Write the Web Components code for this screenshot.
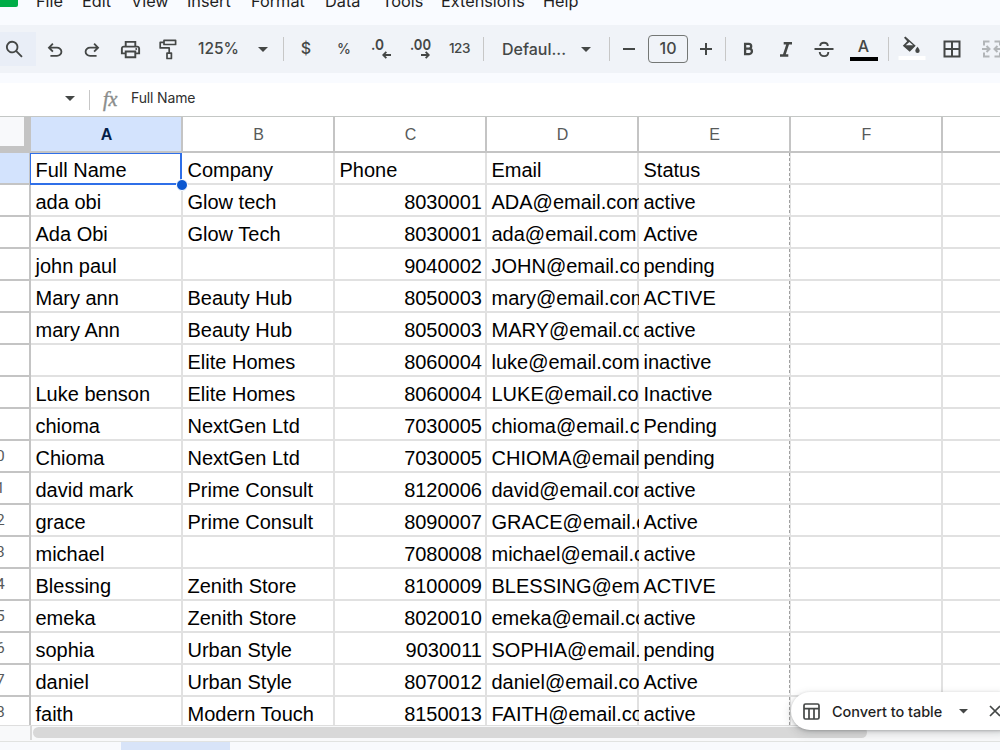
<!DOCTYPE html>
<html lang="en">
<head>
<meta charset="utf-8">
<title>Sheet</title>
<style>
  html, body {
    margin: 0;
    height: 750px;
    overflow: hidden;
    background: #fff;
  }
</style>
</head>
<body>
<sheet-app></sheet-app>

<script>
class MenuBar extends HTMLElement {
  constructor() {
    super();
    this.shadowDOM = this.attachShadow({mode: 'open'});
  }

  connectedCallback() {
    this.shadowDOM.innerHTML = `
      <style>
        :host {
          display: flex;
          height: 25px;
          overflow: hidden;
          font: 16.3px Inter, sans-serif;
          color: #1f1f1f;
        }
        .logo {
          width: 18px;
          height: 7px;
          margin-right: 18px;
          background: #00ac47;
          border-radius: 0 0 2px 0;
        }
        nav {
          display: grid;
          grid-template-columns: 46px 49px 56px 64px 74px 57px 59px 102px 60px;
          height: 20px;
          margin-top: -9px;
          line-height: 20px;
        }
      </style>
      <div class="logo"></div>
      <nav>${['File', 'Edit', 'View', 'Insert', 'Format', 'Data', 'Tools', 'Extensions', 'Help']
        .map(item => `<span>${item}</span>`).join('')}</nav>
    `;
  }
}
customElements.define('menu-bar', MenuBar);

// width: the tool's slot in the bar
class ToolButton extends HTMLElement {
  constructor() {
    super();
    this.shadowDOM = this.attachShadow({mode: 'open'});
  }

  connectedCallback() {
    this.shadowDOM.innerHTML = `
      <style>
        :host {
          display: flex;
          flex: none;
          width: ${this.getAttribute('width')}px;
          height: 34px;
          align-items: center;
          justify-content: center;
        }
        ::slotted(svg) {
          display: block;
          flex: none;
        }
      </style>
      <slot></slot>
    `;
  }
}
customElements.define('tool-button', ToolButton);

class ToolBar extends HTMLElement {
  constructor() {
    super();
    this.shadowDOM = this.attachShadow({mode: 'open'});
  }

  connectedCallback() {
    this.shadowDOM.innerHTML = `
      <style>
        :host {
          display: flex;
          align-items: center;
          height: 48px;
          overflow: hidden;
          background: #f0f3f8;
          color: #444746;
          font: 500 16px Inter, sans-serif;
        }
        svg { fill: currentColor; }
        .search {
          background: #e9eef7;
          justify-content: flex-start;
          box-sizing: border-box;
          padding-left: 3px;
        }
        .sep {
          flex: none;
          width: 1px;
          height: 24px;
          background: #c7c7c7;
        }
        .pick {
          display: flex;
          flex: none;
          box-sizing: border-box;
          align-items: center;
          justify-content: space-between;
        }
        .pick span { padding-bottom: 1px; }
        .pick svg { margin-top: 1px; }
        .zoom { width: 97px; padding: 0 15px 0 12px; font-size: 15.500px; }
        .font { width: 125px; padding: 0 18px 0 18px; font-size: 16px; }
        .size {
          flex: none;
          box-sizing: border-box;
          width: 40px;
          height: 28px;
          margin-left: 2px;
          border: 1px solid #747775;
          border-radius: 4px;
          text-align: center;
          line-height: 25px;
        }
        .letter {
          display: flex;
          flex-direction: column;
          align-items: center;
          width: 28px;
          height: 20px;
          border-bottom: 4px solid #000;
          line-height: 18px;
        }
        .up { padding-bottom: 2px; }
        .gap3 { margin-left: 3px; }
        .gap8 { margin-left: 8px; }
        .gap4 { margin-left: 4px; }
      </style>
      <tool-button class="search" width="36">
        <svg width="23" height="23" viewBox="0 0 24 24"><path d="M20.5 19l-5.700-5.700a6.500 6.500 0 1 0-1.400 1.400l5.700 5.700zM5 9.500a4.600 4.600 0 1 1 9.200 0a4.600 4.600 0 1 1-9.200 0z"/></svg>
      </tool-button>
      <tool-button width="37">
        <svg width="22" height="22" viewBox="0 0 24 24"><path d="M7 20.500v-2h7.100q1.575 0 2.738-1T18 15t-1.162-2.500T14.100 11.500H7.800l2.600 2.600L9 15.500l-5-5 5-5 1.400 1.400L7.800 9.500h6.300q2.425 0 4.163 1.575T20 15t-1.738 3.925T14.100 20.500z"/></svg>
      </tool-button>
      <tool-button width="37">
        <svg width="22" height="22" viewBox="0 0 24 24"><path d="M17 20.500v-2H9.900q-1.575 0-2.738-1T6 15t1.162-2.500T9.900 11.500h6.300l-2.600 2.600L15 15.500l5-5-5-5-1.400 1.400L16.200 9.500H9.900q-2.425 0-4.163 1.575T4 15t1.737 3.925T9.900 20.500z"/></svg>
      </tool-button>
      <tool-button width="40">
        <svg width="23" height="23" viewBox="0 0 24 24"><path d="M19 8h-1V3H6v5H5c-1.660 0-3 1.340-3 3v6h4v4h12v-4h4v-6c0-1.660-1.340-3-3-3zM8 5h8v3H8V5zm8 12v2H8v-4h8v2zm2-2v-2H6v2H4v-4c0-.55.450-1 1-1h14c.550 0 1 .450 1 1v4h-2z"/><circle cx="18" cy="11.500" r="1"/></svg>
      </tool-button>
      <tool-button width="36">
        <svg width="20" height="22" viewBox="0 0 20 22" style="fill:none;stroke:currentColor;stroke-width:1.700"><path d="M6 2.400h11.600v4.100H6zM6 4.400H2.200v5.500h9v5.200M9 15.100h4.400v5.400H9z" stroke-linejoin="round"/></svg>
      </tool-button>
      <div class="pick zoom"><span>125%</span><svg width="10" height="5"><path d="M0 0h10L5 5z"/></svg></div>
      <div class="sep"></div>
      <tool-button width="44"><span class="up">$</span></tool-button>
      <tool-button width="32"><span class="up" style="font-size:14px">%</span></tool-button>
      <tool-button width="42">
        <svg width="22" height="22" viewBox="0 0 22 22"><text x="1" y="12" font-size="15" font-weight="600" textLength="13" lengthAdjust="spacingAndGlyphs">.0</text><path d="M21 16v1.900h-5.500l1.500 1.500-1.300 1.300-3.700-3.700 3.700-3.700 1.300 1.300-1.500 1.400z"/></svg>
      </tool-button>
      <tool-button width="38">
        <svg width="22" height="22" viewBox="0 0 22 22"><text x="0" y="12" font-size="15" font-weight="600" textLength="21" lengthAdjust="spacingAndGlyphs">.00</text><path d="M11 16v1.900h5.500l-1.500 1.500 1.300 1.300 3.700-3.700-3.700-3.700-1.300 1.300 1.500 1.400z"/></svg>
      </tool-button>
      <tool-button width="39"><span class="up" style="font-size:13.500px;letter-spacing:-.4px">123</span></tool-button>
      <div class="sep gap4"></div>
      <div class="pick font"><span>Defaul...</span><svg width="10" height="5"><path d="M0 0h10L5 5z"/></svg></div>
      <div class="sep"></div>
      <tool-button width="38"><svg width="14" height="14"><path d="M1 6h12v2H1z"/></svg></tool-button>
      <div class="size" style="margin-left:0">10</div>
      <tool-button width="35"><svg width="14" height="14"><path d="M1 6h5V1h2v5h5v2H8v5H6V8H1z"/></svg></tool-button>
      <div class="sep" style="margin-left:2px"></div>
      <tool-button width="45">
        <svg width="11" height="14" viewBox="0 0 12 14" style="fill:none;stroke:currentColor;stroke-width:2.500"><path d="M2.300 1.300h4a2.600 2.600 0 0 1 0 5.300h-4zM2.300 6.600h4.500a2.900 2.900 0 0 1 0 5.900H2.300z"/></svg>
      </tool-button>
      <tool-button width="30">
        <svg width="14" height="15" viewBox="0 0 14 15"><path d="M4.700 0H13v2.500H10L6.800 12.300h2.500v2.500H1v-2.500h3L7.200 2.500H4.700z"/></svg>
      </tool-button>
      <tool-button width="46">
        <svg width="20" height="18" viewBox="0 0 20 18" style="fill:none;stroke:currentColor;stroke-width:1.900"><path d="M.5 9h19M6.200 6C6.400 1.600 13.600 1.600 13.800 6M5.700 12c.5 5.500 8.600 5.500 8.600 0"/></svg>
      </tool-button>
      <tool-button width="33"><span class="letter">A</span></tool-button>
      <div class="sep gap8"></div>
      <tool-button width="46">
        <svg width="28" height="26" viewBox="0 0 28 26"><path d="M6 1.800L7.400.4l10.300 9.400-6 6-6.900-6.100L9.200 5.300zM7.700 9.200h7.400L11.400 6.100z" fill-rule="evenodd"/><path d="M19.500 10.700s2.200 2.500 2.200 4a2.200 2.200 0 0 1-4.400 0c0-1.500 2.200-4 2.200-4z"/><path d="M.5 20h27v4H.5z" fill="#fff"/></svg>
      </tool-button>
      <tool-button width="34">
        <svg width="18" height="18" viewBox="0 0 18 18" style="fill:none;stroke:currentColor;stroke-width:2"><path d="M1.500 1.500h15v15h-15zM9 1.500v15M1.500 9h15"/></svg>
      </tool-button>
      <tool-button width="46">
        <svg width="20" height="18" viewBox="0 0 20 18" style="fill:none;stroke:#b2b5b8;stroke-width:2"><path d="M7.500 1.500H2v4M2 12.500v4h5.500M12.500 1.500H18v4M18 12.500v4h-5.500M0 9h7M4.500 6l3 3-3 3M20 9h-7M15.500 6l-3 3 3 3"/></svg>
      </tool-button>
    `;
  }
}
customElements.define('tool-bar', ToolBar);

class FormulaBar extends HTMLElement {
  constructor() {
    super();
    this.shadowDOM = this.attachShadow({mode: 'open'});
  }

  connectedCallback() {
    this.shadowDOM.innerHTML = `
      <style>
        :host {
          display: flex;
          box-sizing: border-box;
          height: 34px;
          margin-top: 10px;
          padding: 0 0 2px 65px;
          align-items: center;
          background: #fff;
          border-bottom: 1px solid #c4c7c5;
          font: 14px Inter, sans-serif;
          color: #303030;
        }
        .sep {
          width: 1px;
          height: 20px;
          margin: 2px 13px 0 14px;
          background: #c7c7c7;
        }
        .fx {
          width: 18px;
          margin: 1px 10px 0 0;
          font: italic 20px/20px "Liberation Serif", serif;
          color: #8a8d8c;
          -webkit-text-stroke: .4px #8a8d8c;
        }
        .value { letter-spacing: -.15px; padding-bottom: 2px; }
      </style>
      <svg width="10" height="5" fill="#444746"><path d="M0 0h10L5 5z"/></svg>
      <div class="sep"></div>
      <span class="fx">fx</span>
      <span class="value"><slot></slot></span>
    `;
  }
}
customElements.define('formula-bar', FormulaBar);

class SheetGrid extends HTMLElement {
  constructor() {
    super();
    this.shadowDOM = this.attachShadow({mode: 'open'});
  }

  set rows(rows) {
    this._rows = rows;
    this.render();
  }

  renderRow(row, i) {
    const cells = row.map((text, col) => {
      const names = ['cell'];
      if (col === 2 && i > 0) names.push('num');
      if (col === 4) names.push('edge');
      if (col === 0 && i === 0) names.push('active');
      return `<div class="${names.join(' ')}">${text}</div>`;
    }).join('');
    // only two-digit numbers reach into view
    const number = i < 9 ? '' : `<span>${i + 1}</span>`;
    return `<div class="rownum${i === 0 ? ' on' : ''}">${number}</div>${cells}
      <div class="cell"></div><div class="cell"></div>`;
  }

  render() {
    this.shadowDOM.innerHTML = `
      <style>
        :host {
          display: block;
          height: 608px;
          overflow: hidden;
          font: 20px "Liberation Sans", Arial, sans-serif;
          color: #000;
        }
        .grid {
          display: grid;
          grid-template-columns: 31px repeat(7, 152px);
          grid-template-rows: 36px;
          grid-auto-rows: 32px;
        }
        .corner {
          box-sizing: border-box;
          background: #f8f9fb;
          border-right: 7px solid #c4c4c4;
          border-bottom: 7px solid #c4c4c4;
        }
        .head {
          box-shadow: inset -2px -2px #c4c4c4;
          padding-right: 1px;
          text-align: center;
          font: 16px/35px "Liberation Sans", Arial, sans-serif;
          color: #575a5a;
        }
        .head.on {
          background: #d3e3fd;
          color: #041e49;
          font-weight: 700;
        }
        .rownum {
          display: flex;
          justify-content: flex-end;
          overflow: hidden;
          box-shadow: inset -2px -2px #c4c4c4;
          font: 15.500px/31px Roboto, sans-serif;
          color: #575a5a;
        }
        .rownum span {
          flex: none;
          width: 66px;
          margin-right: 2px;
          text-align: center;
        }
        .rownum.on { background: #d3e3fd; }
        .cell {
          box-sizing: border-box;
          overflow: hidden;
          padding: 0 5px 0 4.500px;
          white-space: nowrap;
          line-height: 34px;
          box-shadow: inset -2px -2px #e1e1e1;
        }
        .num { text-align: right; }
        .edge {
          background: repeating-linear-gradient(#a0a0a0 0 3px, #f4f4f4 3px 5px) 150px 0 / 1px 100% no-repeat;
          box-shadow: inset -1px -2px #e1e1e1;
        }
        .active {
          position: relative;
          overflow: visible;
          box-shadow: none;
        }
        .active::before {
          content: "";
          position: absolute;
          inset: 0 1px 0 -1px;
          border: solid #2f6fe8;
          border-width: 1px 2px 2px 1px;
        }
        .active::after {
          content: "";
          position: absolute;
          right: -5px;
          bottom: -6px;
          width: 10px;
          height: 10px;
          border: 1px solid #fff;
          border-radius: 50%;
          background: #0b57d0;
        }
      </style>
      <div class="grid">
        <div class="corner"></div>
        ${['A', 'B', 'C', 'D', 'E', 'F', ''].map((name, i) =>
          `<div class="head${i === 0 ? ' on' : ''}">${name}</div>`).join('')}
        ${this._rows.map((row, i) => this.renderRow(row, i)).join('')}
      </div>
    `;
  }
}
customElements.define('sheet-grid', SheetGrid);

class ScrollTrack extends HTMLElement {
  constructor() {
    super();
    this.shadowDOM = this.attachShadow({mode: 'open'});
  }

  connectedCallback() {
    this.shadowDOM.innerHTML = `
      <style>
        :host { display: block; }
        .track {
          display: flex;
          box-sizing: border-box;
          height: 16px;
          border-top: 1px solid #dedede;
          background: #f8f9fa;
        }
        .left {
          box-sizing: border-box;
          width: 32px;
          height: 14px;
          margin-right: 1px;
          border-right: 2px solid #d9d9d9;
        }
        .thumb {
          width: 834px;
          height: 11px;
          margin-top: 1px;
          border-radius: 6px;
          background: #d8d8d8;
        }
        .tabs {
          height: 9px;
          box-sizing: border-box;
          border-top: 1px solid #e1e3e1;
          background: #f8fafd;
        }
        .tab {
          width: 109px;
          height: 8px;
          margin-left: 121px;
          background: #d8e4f8;
        }
      </style>
      <div class="track"><div class="left"></div><div class="thumb"></div></div>
      <div class="tabs"><div class="tab"></div></div>
    `;
  }
}
customElements.define('scroll-track', ScrollTrack);

class ConvertPill extends HTMLElement {
  constructor() {
    super();
    this.shadowDOM = this.attachShadow({mode: 'open'});
  }

  connectedCallback() {
    this.shadowDOM.innerHTML = `
      <style>
        :host {
          position: absolute;
          left: 791px;
          top: 692px;
          display: flex;
          box-sizing: border-box;
          align-items: center;
          width: 226px;
          height: 38px;
          padding-left: 12px;
          border-radius: 19px;
          background: #fff;
          box-shadow: 0 1px 3px rgba(60, 64, 67, .3), 0 3px 8px 1px rgba(60, 64, 67, .18);
          font: 500 14.500px Inter, sans-serif;
          color: #1f1f1f;
        }
        svg { flex: none; }
        .label { width: 110px; margin: 0 17px 0 12px; white-space: nowrap; letter-spacing: -.05px; }
        .arrow { margin-top: 1px; }
        .close { margin-left: 21px; }
      </style>
      <svg width="17" height="17" fill="none" stroke="#444746" stroke-width="1.700"><rect x="1" y="1" width="15" height="15" rx="1.500"/><path d="M1 5.700h15M6 5.700V16M11 5.700V16"/></svg>
      <span class="label">Convert to table</span>
      <svg class="arrow" width="9" height="5" fill="#444746"><path d="M0 0h9L4.500 4.500z"/></svg>
      <svg class="close" width="12" height="12" stroke="#444746" stroke-width="1.700"><path d="M1 1l10 10M11 1L1 11"/></svg>
    `;
  }
}
customElements.define('convert-pill', ConvertPill);

const people = [
  ['Full Name', 'Company', 'Phone', 'Email', 'Status'],
  ['ada obi', 'Glow tech', '8030001', 'ADA@email.com', 'active'],
  ['Ada Obi', 'Glow Tech', '8030001', 'ada@email.com', 'Active'],
  ['john paul', '', '9040002', 'JOHN@email.com', 'pending'],
  ['Mary ann', 'Beauty Hub', '8050003', 'mary@email.com', 'ACTIVE'],
  ['mary Ann', 'Beauty Hub', '8050003', 'MARY@email.com', 'active'],
  ['', 'Elite Homes', '8060004', 'luke@email.com', 'inactive'],
  ['Luke benson', 'Elite Homes', '8060004', 'LUKE@email.com', 'Inactive'],
  ['chioma', 'NextGen Ltd', '7030005', 'chioma@email.com', 'Pending'],
  ['Chioma', 'NextGen Ltd', '7030005', 'CHIOMA@email.com', 'pending'],
  ['david mark', 'Prime Consult', '8120006', 'david@email.com', 'active'],
  ['grace', 'Prime Consult', '8090007', 'GRACE@email.com', 'Active'],
  ['michael', '', '7080008', 'michael@email.com', 'active'],
  ['Blessing', 'Zenith Store', '8100009', 'BLESSING@email.com', 'ACTIVE'],
  ['emeka', 'Zenith Store', '8020010', 'emeka@email.com', 'active'],
  ['sophia', 'Urban Style', '9030011', 'SOPHIA@email.com', 'pending'],
  ['daniel', 'Urban Style', '8070012', 'daniel@email.com', 'Active'],
  ['faith', 'Modern Touch', '8150013', 'FAITH@email.com', 'active']
];

class SheetApp extends HTMLElement {
  constructor() {
    super();
    this.shadowDOM = this.attachShadow({mode: 'open'});
  }

  connectedCallback() {
    this.shadowDOM.innerHTML = `
      <style>
        :host {
          display: block;
          position: relative;
          width: 1000px;
          height: 750px;
          overflow: hidden;
          background: #f9fbff;
        }
        sheet-grid { background: #fff; }
      </style>
      <menu-bar></menu-bar>
      <tool-bar></tool-bar>
      <formula-bar>Full Name</formula-bar>
      <sheet-grid></sheet-grid>
      <scroll-track></scroll-track>
      <convert-pill></convert-pill>
    `;
    this.shadowDOM.querySelector('sheet-grid').rows = people;
  }
}
customElements.define('sheet-app', SheetApp);
</script>
</body>
</html>
